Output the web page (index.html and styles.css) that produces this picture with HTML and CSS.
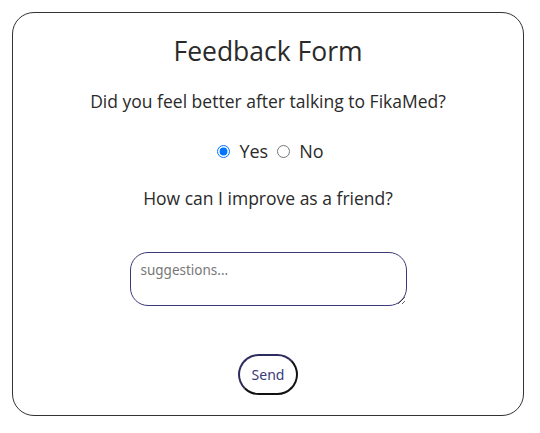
FILE: index.html
```html
<!DOCTYPE html>
<html>
<head>
<meta charset="utf-8">
<link rel="stylesheet" href="styles.css">
</head>
<body>
<form class="card">
  <h1 class="title">Feedback Form</h1>
  <p class="question">Did you feel better after talking to FikaMed?</p>
  <div class="choices">
    <label class="choice"><input type="radio" name="better" checked> Yes</label>
    <label class="choice"><input type="radio" name="better"> No</label>
  </div>
  <p class="question q2">How can I improve as a friend?</p>
  <textarea class="suggest" placeholder="suggestions..."></textarea>
  <button type="button" class="send">Send</button>
</form>
</body>
</html>
```
FILE: styles.css
```css
html, body {
  margin: 0;
  padding: 0;
  background: #fff;
}
body {
  padding: 12px 16px 0 12px;
  font-family: "Open Sans", "Lato", sans-serif;
  color: #222;
}
.card {
  box-sizing: border-box;
  height: 404px;
  border: 1px solid #333;
  border-radius: 22px;
  display: flex;
  flex-direction: column;
  align-items: center;
  padding-top: 20px;
}
.title {
  margin: 0;
  font-size: 26.5px;
  font-weight: 400;
  line-height: 36px;
  color: #2a2a2a;
}
.question {
  margin: 19px 0 0;
  font-size: 17.5px;
  line-height: 26px;
  color: #2a2a2a;
}
.choices {
  margin-top: 25px;
  padding-left: 5px;
  display: flex;
  gap: 9px;
  font-size: 18px;
  line-height: 24px;
  color: #2a2a2a;
}
.choice {
  display: flex;
  align-items: center;
  gap: 9px;
}
.choice input {
  margin: 0;
  width: 13px;
  height: 13px;
}
.q2 {
  margin-top: 22px;
}
.suggest {
  box-sizing: border-box;
  margin-top: 41px;
  width: 277px;
  height: 54px;
  border: 1px solid #3c3a78;
  border-radius: 18px;
  padding: 8px 10px;
  font-family: "Noto Sans", sans-serif;
  font-size: 13.5px;
  color: #333;
  resize: vertical;
  outline: none;
}
.suggest::placeholder {
  color: #777;
}
.send {
  box-sizing: border-box;
  margin-top: 48px;
  width: 60px;
  height: 41px;
  border: 2px solid #2d2c5e;
  border-right-color: #111;
  border-bottom-color: #111;
  border-radius: 21px;
  background: #fff;
  font-family: "Noto Sans", sans-serif;
  font-size: 14px;
  color: #3c3a78;
  padding: 0;
}
```
